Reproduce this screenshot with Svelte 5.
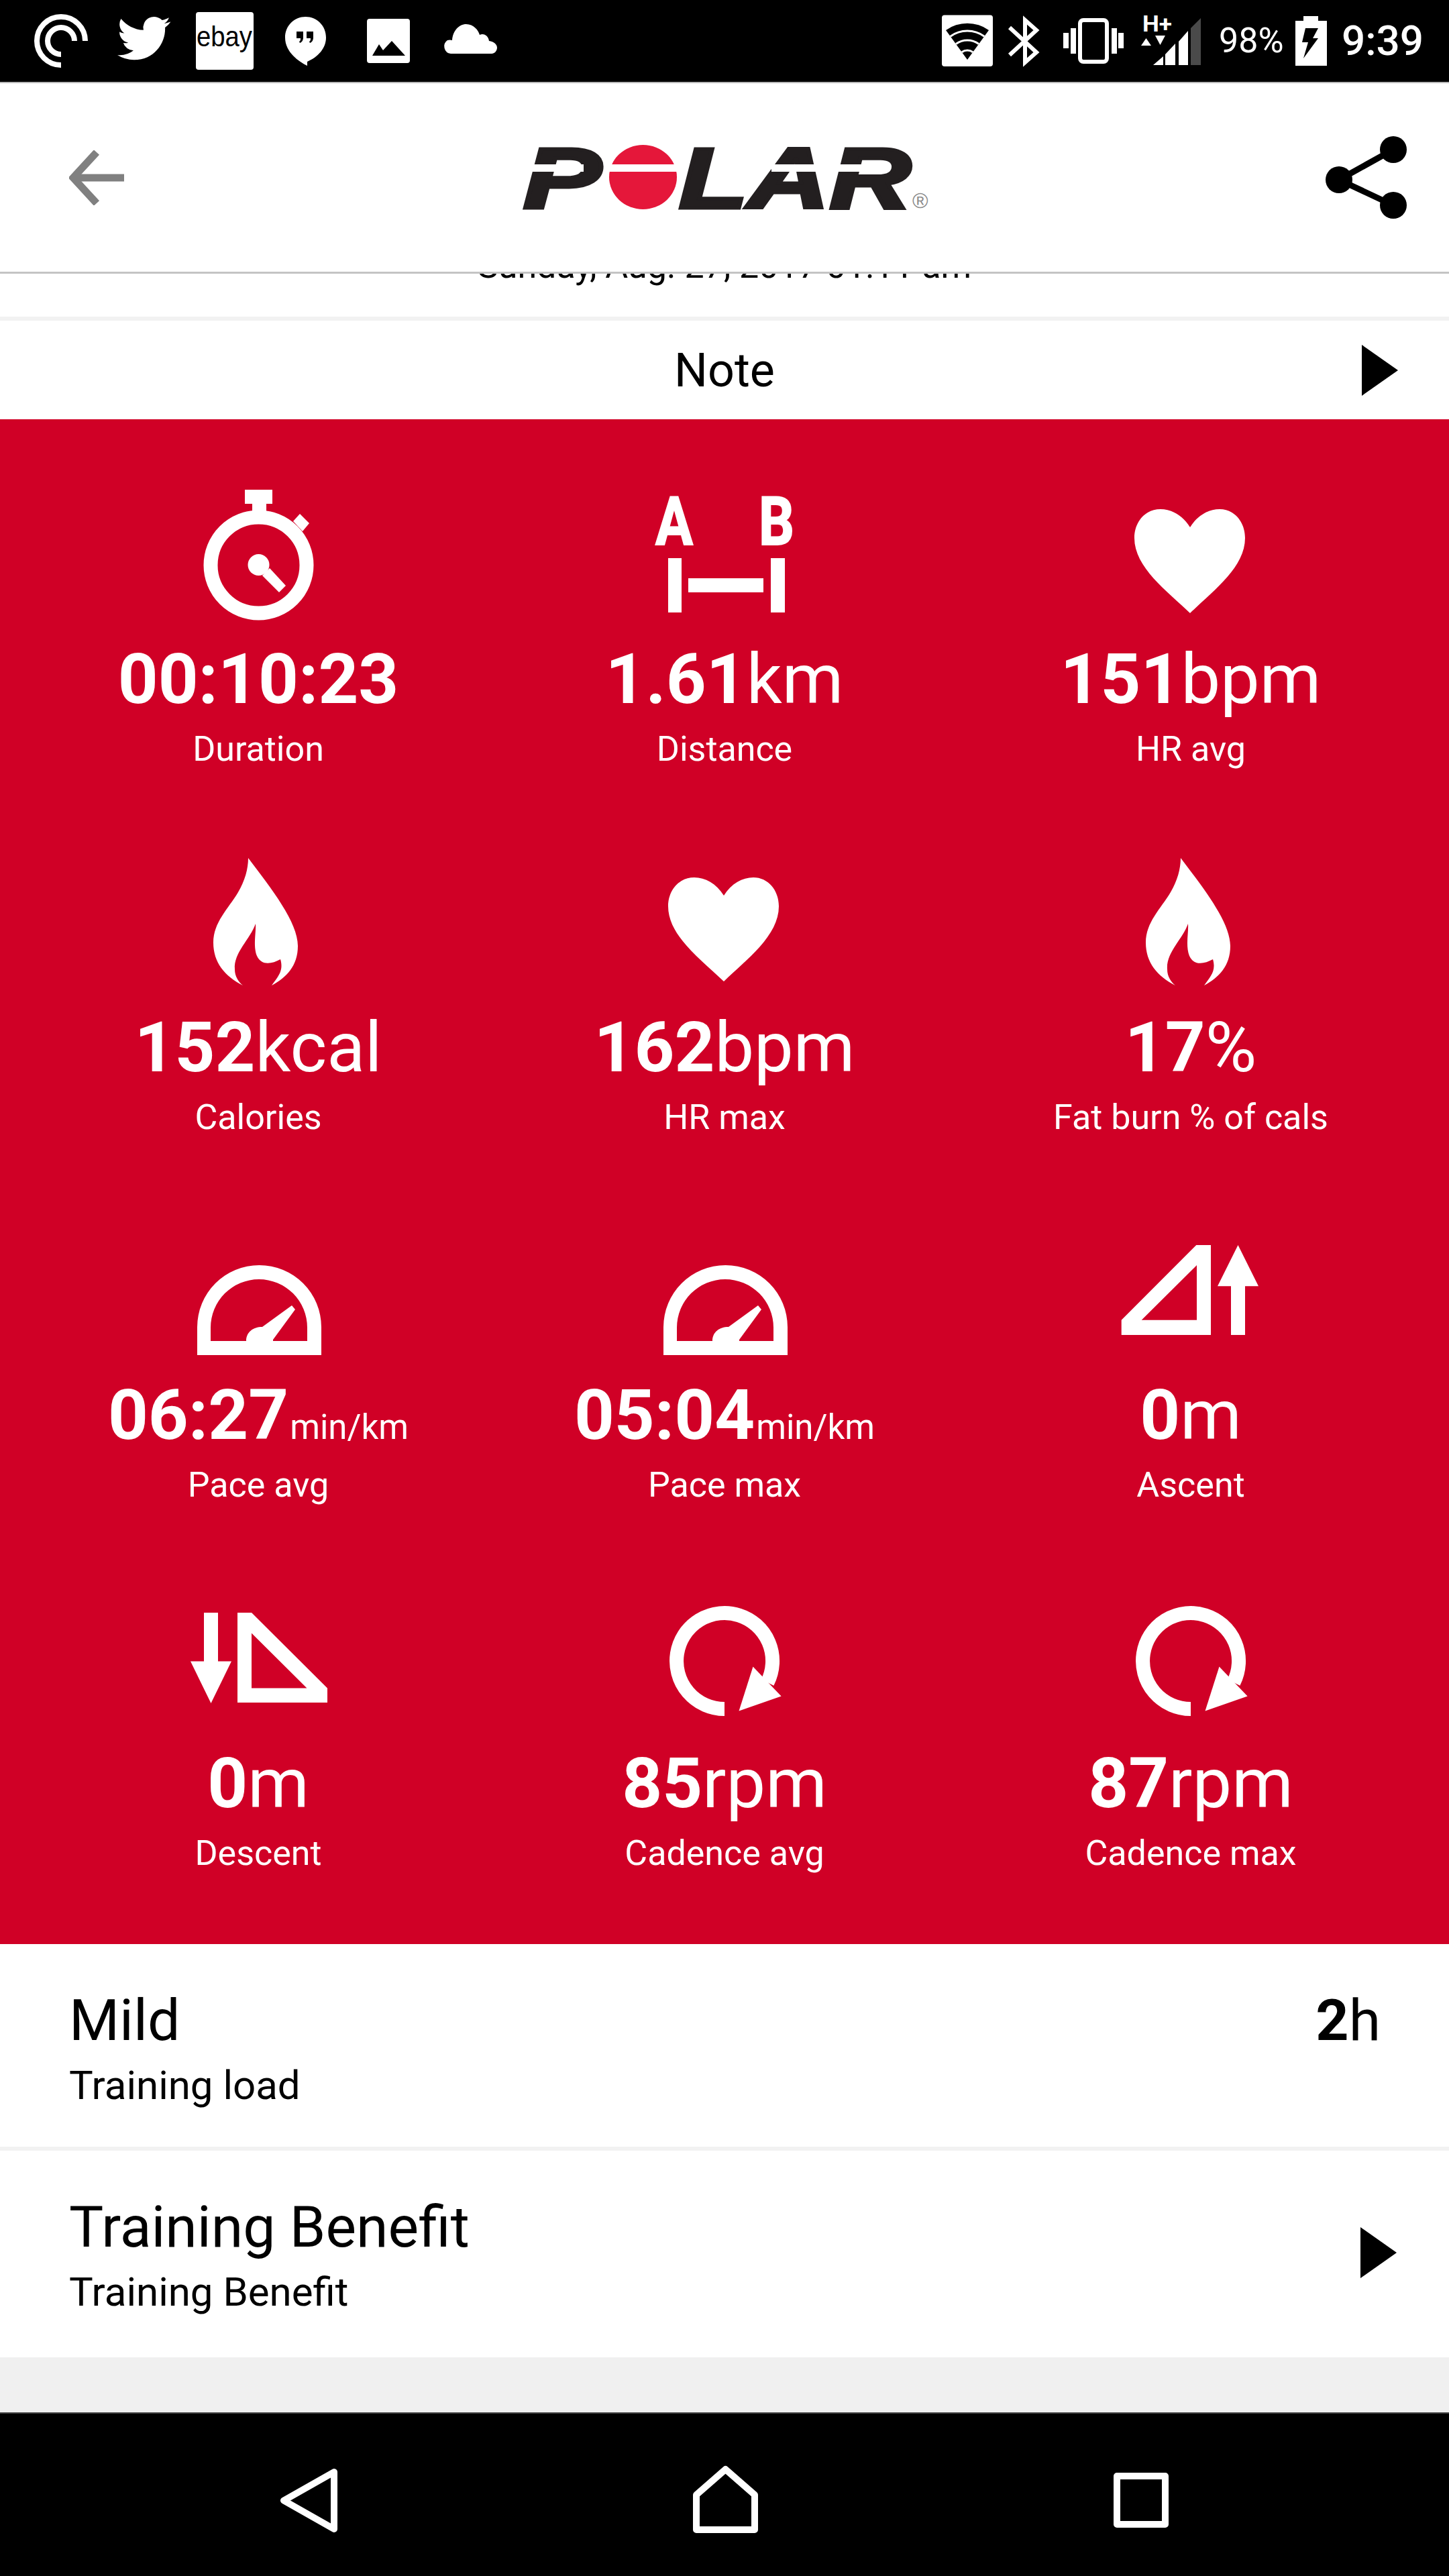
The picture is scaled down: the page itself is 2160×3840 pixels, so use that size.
<script>
  const stats = [
    { icon: 'watch', value: '00:10:23', unit: '', label: 'Duration' },
    { icon: 'dist', value: '1.61', unit: 'km', label: 'Distance' },
    { icon: 'heart', value: '151', unit: 'bpm', label: 'HR avg' },
    { icon: 'flame', value: '152', unit: 'kcal', label: 'Calories' },
    { icon: 'heart', value: '162', unit: 'bpm', label: 'HR max' },
    { icon: 'flame', value: '17', unit: '%', label: 'Fat burn % of cals' },
    { icon: 'gauge', value: '06:27', unit: 'min/km', small: true, label: 'Pace avg' },
    { icon: 'gauge', value: '05:04', unit: 'min/km', small: true, label: 'Pace max' },
    { icon: 'up', value: '0', unit: 'm', label: 'Ascent' },
    { icon: 'down', value: '0', unit: 'm', label: 'Descent' },
    { icon: 'cycle', value: '85', unit: 'rpm', label: 'Cadence avg' },
    { icon: 'cycle', value: '87', unit: 'rpm', label: 'Cadence max' }
  ];
</script>

<div class="screen">
  <header class="status">
    <svg class="st-left" viewBox="0 0 760 122" fill="#fff">
      <g fill="none" stroke="#fff" stroke-width="8">
        <path d="M127 61A36 36 0 1 0 91 97" />
        <path d="M111 61A20 20 0 1 0 91 81" />
      </g>
      <path transform="translate(175 17.5) scale(3.3)" d="M23.953 4.57a10 10 0 01-2.825.775 4.958 4.958 0 002.163-2.723c-.951.555-2.005.959-3.127 1.184a4.92 4.92 0 00-8.384 4.482C7.69 8.095 4.067 6.13 1.64 3.162a4.822 4.822 0 00-.666 2.475c0 1.71.87 3.213 2.188 4.096a4.904 4.904 0 01-2.228-.616v.06a4.923 4.923 0 003.946 4.827 4.996 4.996 0 01-2.212.085 4.936 4.936 0 004.604 3.417 9.867 9.867 0 01-6.102 2.105c-.39 0-.779-.023-1.17-.067a13.995 13.995 0 007.557 2.209c9.053 0 13.998-7.496 13.998-13.985 0-.21 0-.42-.015-.63A9.935 9.935 0 0024 4.59z" />
      <rect x="292" y="18" width="86" height="86" rx="4" />
      <text class="ebay" x="293" y="69" textLength="83" lengthAdjust="spacingAndGlyphs">ebay</text>
      <path d="M455.5 25C472 25 486 38 486 56C486 72 474 85 458 92V98C446 92 425 78 425 56C425 38 439 25 455.5 25Z" />
      <path fill="#000" d="M442 47h10v9c0 4-2 7-5 8l-1-2c2-1 2-3 2-5h-6zM457 47h10v9c0 4-2 7-5 8l-1-2c2-1 2-3 2-5h-6z" />
      <rect x="547" y="28" width="64" height="66" rx="4" />
      <path fill="#000" d="M555 83L565 66L571 75L584 61L604 83Z" />
      <path d="M672 80A11 11 0 0 1 667 60A11 11 0 0 1 674 60C675 46 684 36 695 36C706 36 713 45 715 52C722 49 728 54 729 61C736 62 741 66 741 71C741 76 737 80 733 80Z" />
    </svg>
    <div class="st-right">
      <svg class="st-icons" viewBox="1400 0 400 122" fill="#fff">
        <rect x="1407" y="22.500" width="76" height="76.500" rx="4" />
        <path fill="#000" d="M1445 89L1413 45A55 55 0 0 1 1477 45Z" />
        <g fill="none" stroke="#fff" stroke-width="3">
          <path d="M1419.700 54.200A43 43 0 0 1 1470.300 54.200" />
          <path d="M1428 65.500A29 29 0 0 1 1462 65.500" />
          <path d="M1436.800 77.700A14 14 0 0 1 1453.200 77.700" />
        </g>
        <path fill="none" stroke="#fff" stroke-width="6" d="M1508 41L1548 78L1531 93V30L1548 45L1508 82" />
        <rect x="1613" y="30" width="40" height="62" rx="5" fill="none" stroke="#fff" stroke-width="6" />
        <rect x="1599" y="42" width="8" height="38" />
        <rect x="1660" y="42" width="8" height="38" />
        <rect x="1588" y="49" width="8" height="23" />
        <rect x="1670" y="49" width="8" height="23" />
        <text class="hplus" x="1706" y="47" textLength="44" lengthAdjust="spacingAndGlyphs">H+</text>
        <path d="M1704 68L1711.500 57L1719 68Z" />
        <path d="M1725 53H1740L1732.500 67Z" />
        <path d="M1722 97L1737 84V97Z" />
        <path d="M1740 97V81L1755 65V97Z" />
        <path d="M1760 97V62L1774 46V97Z" />
        <path fill="#4a4a4a" d="M1778 97V42L1793 27V97Z" />
      </svg>
      <span class="pct">98%</span>
      <svg class="batt" viewBox="0 0 47 74" fill="#fff">
        <path d="M12 0H34V7H47V74H0V7H12Z" />
        <path fill="#000" d="M15 18H34L26 33H34L12 63L19 39H10Z" />
      </svg>
      <span class="clock">9:39</span>
    </div>
  </header>

  <nav class="appbar">
    <svg class="back" viewBox="0 0 82 82" fill="none" stroke="#808080">
      <path stroke-width="11" d="M82 41H8" />
      <path stroke-width="11" stroke-linejoin="miter" d="M41 3L6 41L41 79" />
    </svg>
    <svg class="logo" viewBox="760 186 640 158">
      <text class="lg" x="780" y="310" textLength="116" lengthAdjust="spacingAndGlyphs">P</text>
      <ellipse cx="958.500" cy="264" rx="50.500" ry="48" fill="#e5173a" />
      <text class="lg" x="1012" y="310" textLength="346" lengthAdjust="spacingAndGlyphs">LAR</text>
      <rect x="778" y="245" width="92" height="11" fill="#fff" />
      <rect x="900" y="245" width="115" height="11" fill="#fff" />
      <rect x="1150" y="245" width="70" height="11" fill="#fff" />
      <rect x="1250" y="245" width="74" height="11" fill="#fff" />
      <text class="reg" x="1360" y="310">®</text>
    </svg>
    <svg class="share" viewBox="0 0 123 123">
      <path d="M102 20L21 65L102 103" fill="none" stroke="#000" stroke-width="9" />
      <circle cx="102" cy="20" r="20" />
      <circle cx="21" cy="65" r="20" />
      <circle cx="102" cy="103" r="20" />
    </svg>
  </nav>

  <div class="date"><span>Sunday, Aug. 27, 2017 01:11 am</span></div>

  <div class="note">
    <span></span>
    <span class="note-t">Note</span>
    <svg class="tri" viewBox="0 0 54 76"><path d="M0 0L54 38L0 76Z" /></svg>
  </div>

  <section class="stats">
    {#each stats as s}
      <div class="cell">
        <svg class="ico" viewBox="0 0 260 200" fill="#fff">
          {#if s.icon === 'watch'}
            <circle cx="130.500" cy="116.500" r="71.500" fill="none" stroke="#fff" stroke-width="21" />
            <rect x="110" y="4" width="41" height="21" />
            <rect x="121" y="24" width="21" height="20" />
            <path d="M182 51L192 40L206 54L196 66Z" />
            <circle cx="130.500" cy="116" r="16" />
            <path d="M147 121L136 132L161 157L171 147Z" />
          {:else if s.icon === 'dist'}
            <text class="ab" x="27" y="86" textLength="56" lengthAdjust="spacingAndGlyphs">A</text>
            <text class="ab" x="181" y="86" textLength="53" lengthAdjust="spacingAndGlyphs">B</text>
            <rect x="46" y="106" width="20" height="81" />
            <rect x="199" y="106" width="21" height="81" />
            <rect x="76" y="136" width="112" height="21" />
          {:else if s.icon === 'heart'}
            <path d="M129 60C118 42 101 33 85 33C62 33 46 52 46 76C46 120 95 155 129 188C163 155 211 120 211 76C211 52 195 33 173 33C157 33 140 42 129 60Z" />
          {:else if s.icon === 'flame'}
            <path d="M115 4C150 50 189 100 189 135C189 165 172 182 150 194C160 180 168 172 163 155C150 162 135 165 128 150C122 135 127 115 126 102C118 125 93 145 95 170C95 180 100 188 107 194C80 180 63 160 63 130C63 100 85 80 100 55C110 38 115 20 115 4Z" />
          {:else if s.icon === 'gauge'}
            <path fill-rule="evenodd" d="M39 197V155.500A92.500 92.500 0 0 1 224 155.500V197ZM59 176H112C112 163 122 155 136 155L180 123L185 129L152 174V176H203V156A72 72 0 0 0 59 156Z" />
          {:else if s.icon === 'up'}
            <path fill-rule="evenodd" d="M26.700 144.700L138.300 33H160V167H26.700ZM56.700 144.700H139V63Z" />
            <path d="M170 94.300L200.500 33L231 94.300H211V167H190V94.300Z" />
          {:else if s.icon === 'down'}
            <path d="M49 32H70V104.500H90L59.500 167L29 104.500H49Z" />
            <path fill-rule="evenodd" d="M99 32H120L233 144.500V166H99ZM120 62.500V144.500H202.500Z" />
          {:else}
            <path fill="none" stroke="#fff" stroke-width="21" d="M130 175.500A71.500 71.500 0 1 1 194 136" />
            <path d="M172.500 112.500L214.600 156.500L151.500 178.500Z" />
          {/if}
        </svg>
        <div class="val">
          <b>{s.value}</b>{#if s.unit}<span class:small={s.small}>{s.unit}</span>{/if}
        </div>
        <div class="lab">{s.label}</div>
      </div>
    {/each}
  </section>

  <div class="row first">
    <div>
      <div class="r-title">Mild</div>
      <div class="r-sub">Training load</div>
    </div>
    <div class="r-hours"><b>2</b>h</div>
  </div>
  <div class="row second">
    <div>
      <div class="r-title">Training Benefit</div>
      <div class="r-sub">Training Benefit</div>
    </div>
    <svg class="tri" viewBox="0 0 54 76"><path d="M0 0L54 38L0 76Z" /></svg>
  </div>

  <div class="fill"></div>

  <footer class="navbar">
    <svg class="nav-back" viewBox="0 0 86 97" fill="none" stroke="#fff" stroke-width="10" stroke-linejoin="round">
      <path d="M81 6V91L6 48.500Z" />
    </svg>
    <svg class="nav-home" viewBox="0 0 97 101" fill="none" stroke="#fff" stroke-width="10" stroke-linejoin="round">
      <path d="M48.500 6L92 44V96H5V44Z" />
    </svg>
    <svg class="nav-sq" viewBox="0 0 82 82" fill="none" stroke="#fff" stroke-width="10" stroke-linejoin="round">
      <rect x="5" y="5" width="72" height="72" />
    </svg>
  </footer>
</div>

<style>
  :global(body) { margin: 0; background: #fff; }
  .screen {
    width: 2160px;
    height: 3840px;
    display: flex;
    flex-direction: column;
    font-family: Roboto, "Liberation Sans", sans-serif;
    color: #000;
    overflow: hidden;
  }
  svg { display: block; flex: none; }

  .status {
    height: 122px;
    flex: none;
    background: #000;
    display: flex;
    justify-content: space-between;
    align-items: flex-start;
    color: #fff;
  }
  .st-left { width: 760px; height: 122px; }
  .st-right { display: flex; align-items: flex-start; padding-right: 38px; }
  .st-icons { width: 400px; height: 122px; }
  .pct { font-size: 52px; line-height: 122px; margin-left: 20px; width: 114px; }
  .batt { width: 47px; height: 74px; margin-top: 24px; }
  .clock { font-size: 62px; font-weight: 500; line-height: 122px; margin-left: 22px; }
  .ebay { font: 400 42px "Liberation Sans", sans-serif; fill: #000; }
  .hplus { font: 700 33px Roboto, sans-serif; fill: #fff; }

  .appbar {
    height: 286px;
    flex: none;
    box-sizing: border-box;
    border-top: 2px solid #b8b8b8;
    border-bottom: 3px solid #c4c4c4;
    background: #fff;
    display: flex;
    align-items: center;
    padding-left: 103px;
  }
  .back { width: 82px; height: 82px; }
  .logo { width: 640px; height: 158px; margin-left: 575px; }
  .lg { font: italic 700 128px "Liberation Sans", sans-serif; fill: #231f20; stroke: #231f20; stroke-width: 5px; }
  .reg { font: 400 32px "Liberation Sans", sans-serif; fill: #8a8a8a; }
  .share { width: 123px; height: 123px; margin-left: 575px; }

  .date {
    height: 64px;
    flex: none;
    overflow: hidden;
    background: #fff;
    text-align: center;
    font-size: 52px;
    line-height: 52px;
  }
  .date span { display: block; margin-top: -37px; }

  .note {
    height: 153px;
    flex: none;
    box-sizing: border-box;
    border-top: 6px solid #f2f2f2;
    display: grid;
    grid-template-columns: 1fr auto 1fr;
    align-items: center;
    padding-right: 76px;
    padding-left: 76px;
  }
  .note-t { font-size: 70px; line-height: 1; }
  .note .tri { justify-self: end; }
  .tri { width: 54px; height: 76px; }

  .stats {
    height: 2273px;
    flex: none;
    box-sizing: border-box;
    background: #d00026;
    color: #fff;
    padding: 35px 37.5px 0;
    display: grid;
    grid-template-columns: repeat(3, 695px);
    grid-auto-rows: 548.5px;
  }
  .cell {
    padding-top: 66px;
    display: flex;
    flex-direction: column;
    align-items: center;
  }
  .ico { width: 260px; height: 200px; overflow: visible; }
  .ab { font: 700 100px Roboto, sans-serif; fill: #fff; stroke: #fff; stroke-width: 2px; }
  .val {
    margin-top: 27px;
    font-size: 104.5px;
    line-height: 120px;
    height: 120px;
    white-space: nowrap;
  }
  .val b { font-weight: 700; }
  .val span { font-weight: 400; }
  .val .small { font-size: 51px; margin-left: 2px; line-height: 1; }
  .lab {
    margin-top: 9px;
    font-size: 52px;
    line-height: 70px;
    white-space: nowrap;
  }

  .row {
    flex: none;
    box-sizing: border-box;
    background: #fff;
    display: flex;
    justify-content: space-between;
    padding-left: 103px;
  }
  .first { height: 302px; padding-right: 102px; padding-top: 64px; }
  .second {
    height: 314px;
    border-top: 6px solid #f2f2f2;
    padding-top: 64px;
    padding-right: 78px;
  }
  .r-title { font-size: 86px; line-height: 100px; }
  .r-sub { font-size: 60px; line-height: 80px; margin-top: 7px; }
  .r-hours { font-size: 86px; line-height: 100px; }
  .r-hours b { font-weight: 700; }
  .second .tri { margin-top: 50px; }

  .fill { flex: 1; background: #f0f0f0; }

  .navbar {
    height: 244px;
    flex: none;
    box-sizing: border-box;
    background: #000;
    border-top: 2px solid #444;
    display: flex;
    align-items: flex-start;
    padding-left: 417px;
  }
  .nav-back { width: 86px; height: 97px; margin-top: 81px; }
  .nav-home { width: 97px; height: 101px; margin-top: 77px; margin-left: 530px; }
  .nav-sq { width: 82px; height: 82px; margin-top: 88px; margin-left: 530px; }
</style>
